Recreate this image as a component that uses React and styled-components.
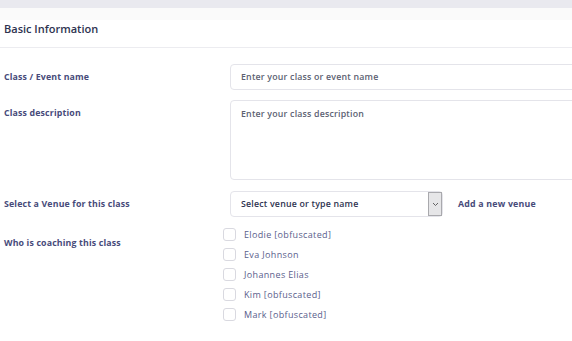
import React from 'react';
import styled, { createGlobalStyle } from 'styled-components';

const GlobalStyle = createGlobalStyle`
  html, body {
    margin: 0;
    padding: 0;
    background: #ffffff;
    overflow: hidden;
  }
  body {
    font-family: "Open Sans", "Noto Sans", Arial, sans-serif;
  }
`;

const Page = styled.div`
  width: 572px;
  height: 341px;
  overflow: hidden;
  background: #ffffff;
`;

const TopBar = styled.div`
  height: 8px;
  background: #e9e9ef;
`;

const SubBar = styled.div`
  height: 12px;
  background: #fafafa;
`;

const Header = styled.div`
  height: 28px;
  display: flex;
  align-items: center;
  padding: 0 4px 11px;
  box-sizing: border-box;
  border-bottom: 1px solid #ececf0;
  color: #2e3350;
  font-size: 11px;
  font-weight: 600;
`;

const Form = styled.div`
  display: flex;
  flex-direction: column;
  padding: 16px 0 0 4px;
`;

const Row = styled.div`
  display: grid;
  grid-template-columns: 226px 1fr;
  align-items: ${({ $align }) => $align || 'center'};
  margin-bottom: ${({ $gap }) => $gap || 0}px;
`;

const Label = styled.div`
  color: #474b7a;
  font-size: 8.8px;
  font-weight: 700;
  letter-spacing: 0.15px;
  padding-top: ${({ $top }) => $top || 0}px;
`;

const Field = styled.div`
  width: 400px;
  height: ${({ $h }) => $h || 26}px;
  box-sizing: border-box;
  border: 1px solid #e4e4ea;
  border-radius: 4px;
  padding: ${({ $h }) => ($h ? '7px 10px' : '0 10px')};
  display: flex;
  align-items: ${({ $h }) => ($h ? 'flex-start' : 'center')};
  color: #5c5f72;
  font-size: 8.8px;
  font-weight: 600;
  letter-spacing: 0.2px;
`;

const SelectWrap = styled.div`
  display: flex;
  align-items: center;
`;

const Select = styled.div`
  width: 213px;
  height: 26px;
  box-sizing: border-box;
  border: 1px solid #e4e4ea;
  border-radius: 4px;
  display: flex;
  align-items: center;
  justify-content: space-between;
  padding-left: 10px;
  color: #2e3350;
  font-size: 8.8px;
  font-weight: 600;
  letter-spacing: 0.2px;
`;

const Caret = styled.div`
  width: 14px;
  height: 24px;
  box-sizing: border-box;
  border: 1px solid #a9a9ad;
  background: #e6e6e8;
  display: flex;
  align-items: center;
  justify-content: center;
`;

const AddLink = styled.span`
  margin-left: 15px;
  color: #474b7a;
  font-size: 8.8px;
  font-weight: 700;
  letter-spacing: 0.2px;
`;

const CheckList = styled.div`
  display: flex;
  flex-direction: column;
  gap: 7px;
  margin: -1px 0 0 -7px;
`;

const CheckItem = styled.label`
  display: flex;
  align-items: center;
  gap: 8px;
  color: #5a5e8c;
  font-size: 9px;
  font-weight: 500;
  letter-spacing: 0.35px;
`;

const Box = styled.span`
  width: 13px;
  height: 13px;
  box-sizing: border-box;
  border: 1px solid #d9d9e0;
  border-radius: 3px;
  background: #fff;
`;

const coaches = [
  'Elodie [obfuscated]',
  'Eva Johnson',
  'Johannes Elias',
  'Kim [obfuscated]',
  'Mark [obfuscated]',
];

export default function App() {
  return (
    <Page>
      <GlobalStyle />
      <TopBar />
      <SubBar />
      <Header>Basic Information</Header>
      <Form>
        <Row $gap={10}>
          <Label>Class / Event name</Label>
          <Field>Enter your class or event name</Field>
        </Row>
        <Row $gap={11} $align="start">
          <Label $top={7}>Class description</Label>
          <Field $h={80}>Enter your class description</Field>
        </Row>
        <Row $gap={12}>
          <Label>Select a Venue for this class</Label>
          <SelectWrap>
            <Select>
              Select venue or type name
              <Caret>
                <svg width="7" height="5" viewBox="0 0 7 5">
                  <path d="M1 1l2.5 2.5L6 1" fill="none" stroke="#555" strokeWidth="0.9" />
                </svg>
              </Caret>
            </Select>
            <AddLink>Add a new venue</AddLink>
          </SelectWrap>
        </Row>
        <Row $align="start">
          <Label $top={8}>Who is coaching this class</Label>
          <CheckList>
            {coaches.map((c) => (
              <CheckItem key={c}>
                <Box />
                {c}
              </CheckItem>
            ))}
          </CheckList>
        </Row>
      </Form>
    </Page>
  );
}
